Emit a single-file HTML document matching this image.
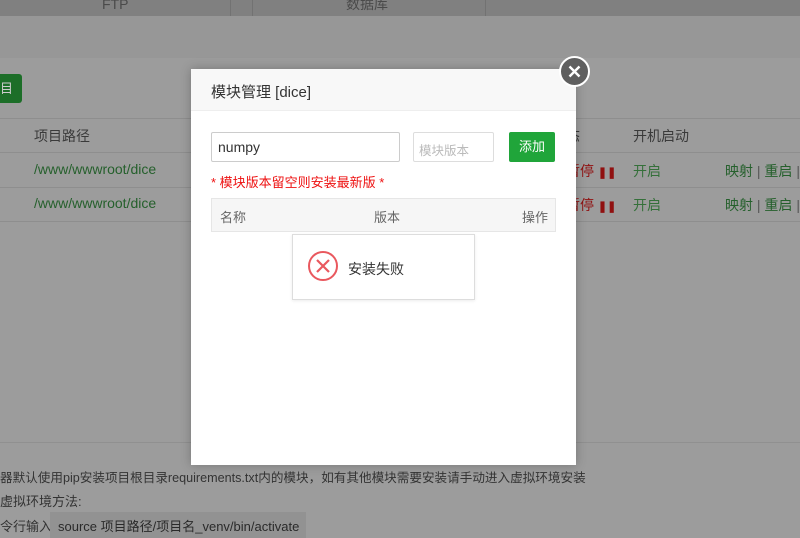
<!DOCTYPE html>
<html><head><meta charset="utf-8"><style>
*{margin:0;padding:0;box-sizing:border-box}
body{width:800px;height:536px;overflow:hidden;background:#9c9c9c;font-family:"Liberation Sans","Noto Sans CJK SC",sans-serif;position:relative;font-size:13px}
.a{position:absolute;white-space:nowrap}
</style></head><body>
<div class="a" style="left:0;top:0;width:800px;height:16px;background:#808080"></div>
<div class="a" style="left:230px;top:0;width:1px;height:16px;background:#727272"></div>
<div class="a" style="left:252px;top:0;width:1px;height:16px;background:#727272"></div>
<div class="a" style="left:485px;top:0;width:1px;height:16px;background:#727272"></div>
<div class="a" style="left:102px;top:-3px;font-size:14px;color:#4a4a4a;line-height:14px">FTP</div>
<div class="a" style="left:346px;top:-3px;font-size:14px;color:#4a4a4a;line-height:14px">数据库</div>
<div class="a" style="left:0;top:16px;width:800px;height:42px;background:#979797"></div>
<div class="a" style="left:-6px;top:74px;width:28px;height:29px;background:#1c6e28;border-radius:3px;color:#ccc;font-size:13px;line-height:29px;padding-left:6px">目</div>
<div class="a" style="left:0;top:118px;width:800px;height:1px;background:#8e8e8e"></div>
<div class="a" style="left:0;top:152px;width:800px;height:1px;background:#8e8e8e"></div>
<div class="a" style="left:0;top:187px;width:800px;height:1px;background:#8e8e8e"></div>
<div class="a" style="left:0;top:221px;width:800px;height:1px;background:#8e8e8e"></div>
<div class="a" style="left:34px;top:126px;color:#3a3a3a;font-size:14px">项目路径</div>
<div class="a" style="left:34px;top:161px;color:#25602c;font-size:14px">/www/wwwroot/dice</div>
<div class="a" style="left:34px;top:195px;color:#25602c;font-size:14px">/www/wwwroot/dice</div>
<div class="a" style="left:566px;top:126px;color:#3a3a3a;font-size:14px">态</div>
<div class="a" style="left:633px;top:126px;color:#3a3a3a;font-size:14px">开机启动</div>
<div class="a" style="left:566px;top:161px;color:#901010;font-size:14px">暂停 <b style="font-size:11px">❚❚</b></div>
<div class="a" style="left:566px;top:195px;color:#901010;font-size:14px">暂停 <b style="font-size:11px">❚❚</b></div>
<div class="a" style="left:633px;top:161px;color:#35703a;font-size:14px">开启</div>
<div class="a" style="left:633px;top:195px;color:#35703a;font-size:14px">开启</div>
<div class="a" style="left:725px;top:161px;color:#25602c;font-size:14px">映射 <span style="color:#555">|</span> 重启 <span style="color:#555">|</span></div>
<div class="a" style="left:725px;top:195px;color:#25602c;font-size:14px">映射 <span style="color:#555">|</span> 重启 <span style="color:#555">|</span></div>
<div class="a" style="left:0;top:442px;width:800px;height:1px;background:#909090"></div>
<div class="a" style="left:0;top:467px;color:#333;font-size:12.6px">器默认使用pip安装项目根目录requirements.txt内的模块，如有其他模块需要安装请手动进入虚拟环境安装</div>
<div class="a" style="left:0;top:491px;color:#333">虚拟环境方法:</div>
<div class="a" style="left:0;top:516px;color:#333">令行输入</div>
<div class="a" style="left:50px;top:512px;width:256px;height:26px;background:#929292;color:#2a2a2a;padding:4px 8px">source 项目路径/项目名_venv/bin/activate</div>

<div class="a" style="left:191px;top:69px;width:385px;height:396px;background:#fff;box-shadow:0 0 10px rgba(0,0,0,.25)"></div>
<div class="a" style="left:191px;top:69px;width:385px;height:42px;background:#f8f8f8;border-bottom:1px solid #eee"></div>
<div class="a" style="left:211px;top:81px;font-size:15px;color:#333">模块管理 [dice]</div>
<div class="a" style="left:211px;top:132px;width:189px;height:30px;border:1px solid #ccc;border-radius:2px;padding:6px;color:#333;font-size:14px">numpy</div>
<div class="a" style="left:413px;top:132px;width:81px;height:30px;border:1px solid #ddd;border-radius:2px;padding:7px 5px;color:#bbb;font-size:12.5px">模块版本</div>
<div class="a" style="left:509px;top:132px;width:46px;height:30px;background:#20a53a;border-radius:2px;color:#fff;text-align:center;line-height:30px;font-size:13px">添加</div>
<div class="a" style="left:211px;top:172px;color:#ee1111;font-size:13px">* 模块版本留空则安装最新版 *</div>
<div class="a" style="left:211px;top:198px;width:345px;height:34px;background:#f6f6f6;border:1px solid #e6e6e6"></div>
<div class="a" style="left:220px;top:207px;color:#666">名称</div>
<div class="a" style="left:374px;top:207px;color:#666">版本</div>
<div class="a" style="left:522px;top:207px;color:#666">操作</div>
<div class="a" style="left:292px;top:234px;width:183px;height:66px;background:#fff;border:1px solid #ddd;box-shadow:0 1px 3px rgba(0,0,0,.08)"></div>
<svg class="a" style="left:307px;top:250px" width="32" height="32" viewBox="0 0 32 32"><circle cx="16" cy="16" r="14" fill="none" stroke="#e9585e" stroke-width="2"/><path d="M10 10L22 22M22 10L10 22" stroke="#e9585e" stroke-width="2.2"/></svg>
<div class="a" style="left:348px;top:259px;color:#333;font-size:14px">安装失败</div>
<div class="a" style="left:559px;top:56px;width:31px;height:31px;border-radius:50%;background:#5f5f5f;border:2px solid #fff"></div>
<svg class="a" style="left:559px;top:56px" width="31" height="31"><path d="M10.5 10.5L20.5 20.5M20.5 10.5L10.5 20.5" stroke="#fff" stroke-width="2.4"/></svg>
</body></html>
